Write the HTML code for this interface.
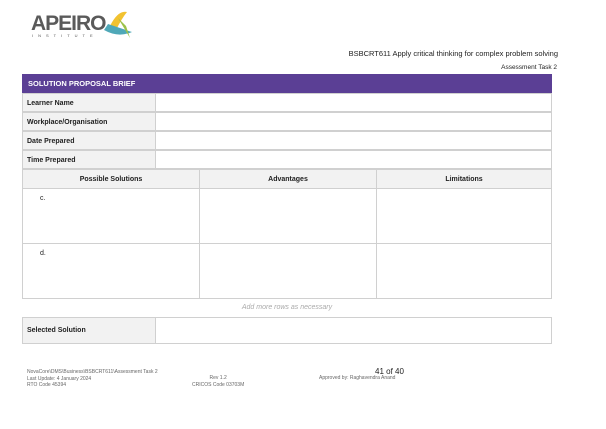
<!DOCTYPE html><html><head><style>
body{margin:0;width:606px;height:429px;background:#fff;font-family:"Liberation Sans",sans-serif;position:relative;overflow:hidden}
.a{position:absolute}
.t{font-size:7px;font-weight:bold;color:#222}
.b{border:1px solid #d0d0d0;box-sizing:border-box}
.f{font-size:5px;color:#666}
</style></head><body>
<div class="a" style="left:31px;top:12px;font-size:21px;font-weight:bold;color:#5a5a5a;letter-spacing:-1px">APEIRO</div>
<div class="a" style="left:32px;top:33px;font-size:4px;color:#555;letter-spacing:5px">INSTITUTE</div>
<svg class="a" style="left:100px;top:4px" width="36" height="38"><path d="M10 22 Q18 6 27 8 Q22 14 16 26Z" fill="#f2c230"/><path d="M4 26 Q18 34 32 28 Q20 24 8 20Z" fill="#4fa8b8"/><path d="M18 14 L30 34 L26 22Z" fill="#9cc24a"/></svg>
<div class="a" style="right:48px;top:49px;font-size:7.5px;color:#222">BSBCRT611 Apply critical thinking for complex problem solving</div>
<div class="a" style="right:49px;top:64px;font-size:6.5px;color:#222">Assessment Task 2</div>
<div class="a" style="left:22px;top:74px;width:530px;height:19px;background:#5b3f95;color:#fff;font-size:7.5px;font-weight:bold;line-height:20px;padding-left:6px;box-sizing:border-box">SOLUTION PROPOSAL BRIEF</div>
<div class="a b" style="left:22px;top:93px;width:134px;height:19px;background:#f2f2f2"></div><div class="a b" style="left:155px;top:93px;width:397px;height:19px"></div>
<div class="a t" style="left:27px;top:100px">Learner Name</div>
<div class="a b" style="left:22px;top:112px;width:134px;height:19px;background:#f2f2f2"></div><div class="a b" style="left:155px;top:112px;width:397px;height:19px"></div>
<div class="a t" style="left:27px;top:119px">Workplace/Organisation</div>
<div class="a b" style="left:22px;top:131px;width:134px;height:19px;background:#f2f2f2"></div><div class="a b" style="left:155px;top:131px;width:397px;height:19px"></div>
<div class="a t" style="left:27px;top:138px">Date Prepared</div>
<div class="a b" style="left:22px;top:150px;width:134px;height:19px;background:#f2f2f2"></div><div class="a b" style="left:155px;top:150px;width:397px;height:19px"></div>
<div class="a t" style="left:27px;top:157px">Time Prepared</div>
<div class="a b" style="left:22px;top:169px;width:178px;height:20px;background:#f2f2f2"></div>
<div class="a b" style="left:199px;top:169px;width:178px;height:20px;background:#f2f2f2"></div>
<div class="a b" style="left:376px;top:169px;width:176px;height:20px;background:#f2f2f2"></div>
<div class="a t" style="left:22px;width:178px;text-align:center;top:176px">Possible Solutions</div>
<div class="a t" style="left:199px;width:178px;text-align:center;top:176px">Advantages</div>
<div class="a t" style="left:376px;width:176px;text-align:center;top:176px">Limitations</div>
<div class="a b" style="left:22px;top:188px;width:178px;height:56px"></div><div class="a b" style="left:199px;top:188px;width:178px;height:56px"></div><div class="a b" style="left:376px;top:188px;width:176px;height:56px"></div>
<div class="a b" style="left:22px;top:243px;width:178px;height:56px"></div><div class="a b" style="left:199px;top:243px;width:178px;height:56px"></div><div class="a b" style="left:376px;top:243px;width:176px;height:56px"></div>
<div class="a t" style="left:40px;top:195px;font-weight:normal">c.</div>
<div class="a t" style="left:40px;top:250px;font-weight:normal">d.</div>
<div class="a" style="left:22px;width:530px;text-align:center;top:304px;font-size:7px;font-style:italic;color:#aaa">Add more rows as necessary</div>
<div class="a b" style="left:22px;top:317px;width:134px;height:27px;background:#f2f2f2"></div><div class="a b" style="left:155px;top:317px;width:397px;height:27px"></div>
<div class="a t" style="left:27px;top:327px">Selected Solution</div>
<div class="a f" style="left:27px;top:369px;line-height:6.5px">NovaCore\DMS\Business\BSBCRT611\Assessment Task 2<br>Last Update: 4 January 2024<br>RTO Code 45394</div>
<div class="a f" style="left:192px;top:375px;line-height:6.5px;text-align:center">Rev 1.2<br>CRICOS Code 03703M</div>
<div class="a" style="left:375px;top:367px;font-size:8px;color:#222">41 of 40</div>
<div class="a f" style="left:319px;top:375px">Approved by: Raghavendra Anand</div>
</body></html>
